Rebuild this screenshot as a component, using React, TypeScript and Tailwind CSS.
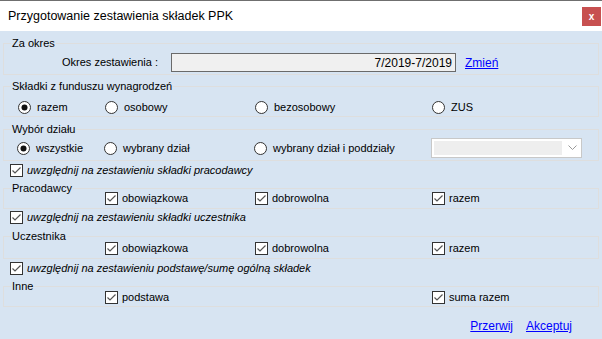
import React from 'react';

const Radio = ({ checked }: { checked?: boolean }) => (
  <svg width="13" height="13" viewBox="0 0 13 13" className="shrink-0">
    <circle cx="6.5" cy="6.5" r="6" fill="#ffffff" stroke="#333333" strokeWidth="1" />
    {checked && <circle cx="6.5" cy="6.5" r="3" fill="#111111" />}
  </svg>
);

const Check = () => (
  <svg width="13" height="13" viewBox="0 0 13 13" className="shrink-0">
    <rect x="0.5" y="0.5" width="12" height="12" fill="#ffffff" stroke="#333333" strokeWidth="1" />
    <path d="M2.5 6.5 L5 9 L10.5 3.5" fill="none" stroke="#555555" strokeWidth="1.2" />
  </svg>
);

const RadioItem = ({ label, checked }: { label: string; checked?: boolean }) => (
  <div className="flex items-center gap-[6px] h-[14px]">
    <Radio checked={checked} />
    <span>{label}</span>
  </div>
);

const CheckItem = ({ label, italic }: { label: string; italic?: boolean }) => (
  <div className="flex items-center gap-[4px] h-[14px]">
    <Check />
    <span className={italic ? 'italic' : ''}>{label}</span>
  </div>
);

const Legend = ({ children }: { children: React.ReactNode }) => (
  <legend className="ml-[7px] px-[1px] leading-[12px]">{children}</legend>
);

const App: React.FC = () => {
  return (
    <div className="w-[602px] h-[339px] overflow-hidden bg-[#d7e4f2] text-[11px] text-black font-['Liberation_Sans',Arial,sans-serif] flex flex-col">
      <div className="h-px bg-[#6f6f6f] shrink-0" />
      <div className="h-[30px] bg-white flex items-center justify-between shrink-0">
        <span className="pl-[8px] text-[12.5px]">Przygotowanie zestawienia składek PPK</span>
        <div className="w-[19px] h-[19px] mr-[1px] bg-[#c75050] text-white font-bold text-[10px] flex items-center justify-center">x</div>
      </div>

      {/* Za okres */}
      <fieldset className="mx-[3px] mt-[6px] border border-[#dedede] pb-[2px]">
        <Legend>Za okres</Legend>
        <div className="flex items-center mt-[4px]">
          <span className="w-[154px] text-right">Okres zestawienia :</span>
          <div className="ml-[13px] w-[285px] h-[19px] bg-[#f0f0f0] border border-[#6a6a6a] flex items-center justify-end pr-[3px] text-[12px]">7/2019-7/2019</div>
          <a className="ml-[9px] text-[#0000ff] underline text-[12px]">Zmień</a>
        </div>
      </fieldset>

      {/* Składki */}
      <fieldset className="mx-[3px] mt-[5px] border border-[#dedede] pb-[2px]">
        <Legend>Składki z funduszu wynagrodzeń</Legend>
        <div className="grid grid-cols-[87px_150px_177px_1fr] pl-[14px] mt-[8px]">
          <RadioItem label="razem" checked />
          <RadioItem label="osobowy" />
          <RadioItem label="bezosobowy" />
          <RadioItem label="ZUS" />
        </div>
      </fieldset>

      {/* Wybór działu */}
      <fieldset className="mx-[3px] mt-[6px] border border-[#dedede] pb-[2px]">
        <Legend>Wybór działu</Legend>
        <div className="grid grid-cols-[87px_150px_177px_1fr] items-center pl-[13px] mt-[3px]">
          <RadioItem label="wszystkie" checked />
          <RadioItem label="wybrany dział" />
          <RadioItem label="wybrany dział i poddziały" />
          <div className="w-[151px] h-[20px] bg-white border border-[#c8c8c8] flex items-center p-[2px]">
            <div className="w-[128px] h-[14px] bg-[#eeeeee]" />
            <svg width="9" height="6" viewBox="0 0 9 6" className="ml-[6px]">
              <path d="M0.5 0.5 L4.5 4.5 L8.5 0.5" fill="none" stroke="#9a9a9a" strokeWidth="1" />
            </svg>
          </div>
        </div>
      </fieldset>

      <div className="pl-[10px] mt-[2px]">
        <CheckItem label="uwzględnij na zestawieniu składki pracodawcy" italic />
      </div>

      {/* Pracodawcy */}
      <fieldset className="mx-[3px] mt-[5px] border border-[#dedede] pb-[3px]">
        <Legend>Pracodawcy</Legend>
        <div className="grid grid-cols-[87px_150px_177px_1fr] pl-[14px] -mt-[3px]">
          <div />
          <CheckItem label="obowiązkowa" />
          <CheckItem label="dobrowolna" />
          <CheckItem label="razem" />
        </div>
      </fieldset>

      <div className="pl-[10px] mt-[1px]">
        <CheckItem label="uwzględnij na zestawieniu składki uczestnika" italic />
      </div>

      {/* Uczestnika */}
      <fieldset className="mx-[3px] mt-[6px] border border-[#dedede] pb-[3px]">
        <Legend>Uczestnika</Legend>
        <div className="grid grid-cols-[87px_150px_177px_1fr] pl-[14px] -mt-[1px]">
          <div />
          <CheckItem label="obowiązkowa" />
          <CheckItem label="dobrowolna" />
          <CheckItem label="razem" />
        </div>
      </fieldset>

      <div className="pl-[10px] mt-[2px]">
        <CheckItem label="uwzględnij na zestawieniu podstawę/sumę ogólną składek" italic />
      </div>

      {/* Inne */}
      <fieldset className="mx-[3px] mt-[5px] border border-[#dedede] pb-[2px]">
        <Legend>Inne</Legend>
        <div className="grid grid-cols-[87px_150px_177px_1fr] pl-[14px] -mt-[2px]">
          <div />
          <CheckItem label="podstawa" />
          <div />
          <CheckItem label="suma razem" />
        </div>
      </fieldset>

      <div className="flex justify-end gap-[13px] pr-[30px] mt-[10px] text-[12px]">
        <a className="text-[#0000ff] underline">Przerwij</a>
        <a className="text-[#0000ff] underline">Akceptuj</a>
      </div>
    </div>
  );
};

export default App;
